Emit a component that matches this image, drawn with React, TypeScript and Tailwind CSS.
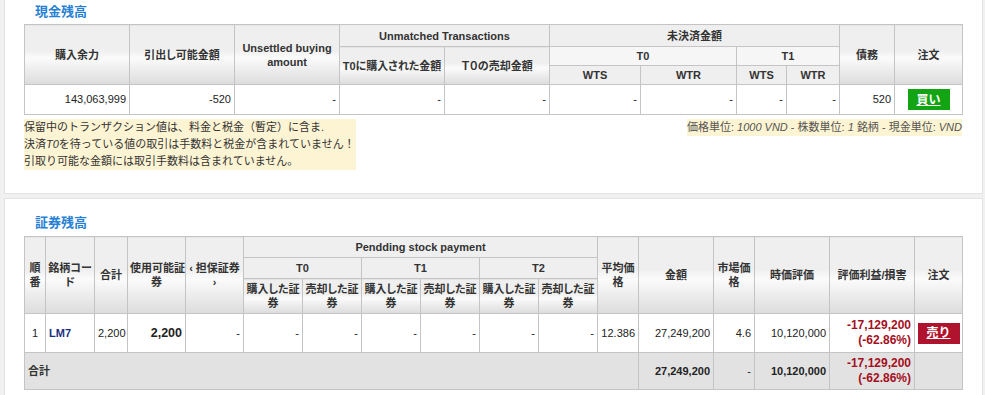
import React from "react";

const bd = "border border-[#c4c4c4]";
const grad =
  "bg-[linear-gradient(to_bottom,#efefef_0%,#efefef_42%,#fbfbfb_55%,#dcdcdc_100%)]";
const th = `${bd} font-bold text-center align-middle px-[2px] leading-[14px] text-[#333] [font-feature-settings:'palt']`;
const flat = "bg-[#efefef]";
const td = `${bd} text-right align-middle px-[3px] text-[#222]`;

function CashTable() {
  return (
    <table className="table-fixed border-collapse w-[938px]">
      <colgroup>
        <col className="w-[105px]" />
        <col className="w-[105px]" />
        <col className="w-[105px]" />
        <col className="w-[105px]" />
        <col className="w-[105px]" />
        <col className="w-[91px]" />
        <col className="w-[96px]" />
        <col className="w-[50px]" />
        <col className="w-[53px]" />
        <col className="w-[55px]" />
        <col className="w-[68px]" />
      </colgroup>
      <thead>
        <tr className="h-[22px]">
          <th rowSpan={3} className={`${th} ${grad}`}>購入余力</th>
          <th rowSpan={3} className={`${th} ${grad}`}>引出し可能金額</th>
          <th rowSpan={3} className={`${th} ${grad}`}>Unsettled buying amount</th>
          <th colSpan={2} className={`${th} ${flat}`}>Unmatched Transactions</th>
          <th colSpan={4} className={`${th} ${flat}`}>未決済金額</th>
          <th rowSpan={3} className={`${th} ${grad}`}>債務</th>
          <th rowSpan={3} className={`${th} ${grad}`}>注文</th>
        </tr>
        <tr className="h-[19px]">
          <th rowSpan={2} className={`${th} ${grad} whitespace-nowrap`}>T0に購入された金額</th>
          <th rowSpan={2} className={`${th} ${grad} whitespace-nowrap`}>Ｔ０の売却金額</th>
          <th colSpan={2} className={`${th} bg-[#f6f6f6]`}>T0</th>
          <th colSpan={2} className={`${th} bg-[#f6f6f6]`}>T1</th>
        </tr>
        <tr className="h-[19px]">
          <th className={`${th} ${flat}`}>WTS</th>
          <th className={`${th} ${flat}`}>WTR</th>
          <th className={`${th} ${flat}`}>WTS</th>
          <th className={`${th} ${flat}`}>WTR</th>
        </tr>
      </thead>
      <tbody>
        <tr className="h-[30px] bg-white">
          <td className={td}>143,063,999</td>
          <td className={td}>-520</td>
          <td className={td}>-</td>
          <td className={td}>-</td>
          <td className={td}>-</td>
          <td className={td}>-</td>
          <td className={td}>-</td>
          <td className={td}>-</td>
          <td className={td}>-</td>
          <td className={td}>520</td>
          <td className={`${bd} text-center align-middle`}>
            <span className="inline-flex w-[42px] h-[21px] items-center justify-center bg-[#12a412] text-white font-bold text-[12px] underline">
              買い
            </span>
          </td>
        </tr>
      </tbody>
    </table>
  );
}

function Two({ a, b }: { a: string; b: string }) {
  return (
    <>
      {a}
      <br />
      {b}
    </>
  );
}

function StockTable() {
  const sub = ["購入した証", "売却した証", "購入した証", "売却した証", "購入した証", "売却した証"];
  return (
    <table className="table-fixed border-collapse w-[938px]">
      <colgroup>
        <col className="w-[21px]" />
        <col className="w-[49px]" />
        <col className="w-[33px]" />
        <col className="w-[58px]" />
        <col className="w-[58px]" />
        <col className="w-[59px]" />
        <col className="w-[59px]" />
        <col className="w-[59px]" />
        <col className="w-[59px]" />
        <col className="w-[59px]" />
        <col className="w-[59px]" />
        <col className="w-[41px]" />
        <col className="w-[75px]" />
        <col className="w-[41px]" />
        <col className="w-[75px]" />
        <col className="w-[85px]" />
        <col className="w-[48px]" />
      </colgroup>
      <thead>
        <tr className="h-[21px]">
          <th rowSpan={3} className={`${th} ${grad} px-[1px]`}><Two a="順" b="番" /></th>
          <th rowSpan={3} className={`${th} ${grad} whitespace-nowrap`}><Two a="銘柄コー" b="ド" /></th>
          <th rowSpan={3} className={`${th} ${grad}`}>合計</th>
          <th rowSpan={3} className={`${th} ${grad} whitespace-nowrap`}><Two a="使用可能証" b="券" /></th>
          <th rowSpan={3} className={`${th} ${grad} whitespace-nowrap`}><Two a="‹ 担保証券" b="›" /></th>
          <th colSpan={6} className={`${th} ${flat}`}>Pendding stock payment</th>
          <th rowSpan={3} className={`${th} ${grad} whitespace-nowrap`}><Two a="平均価" b="格" /></th>
          <th rowSpan={3} className={`${th} ${grad}`}>金額</th>
          <th rowSpan={3} className={`${th} ${grad} whitespace-nowrap`}><Two a="市場価" b="格" /></th>
          <th rowSpan={3} className={`${th} ${grad}`}>時価評価</th>
          <th rowSpan={3} className={`${th} ${grad} whitespace-nowrap`}>評価利益/損害</th>
          <th rowSpan={3} className={`${th} ${grad}`}>注文</th>
        </tr>
        <tr className="h-[21px]">
          <th colSpan={2} className={`${th} ${flat}`}>T0</th>
          <th colSpan={2} className={`${th} ${flat}`}>T1</th>
          <th colSpan={2} className={`${th} ${flat}`}>T2</th>
        </tr>
        <tr className="h-[35px]">
          {sub.map((s, i) => (
            <th key={i} className={`${th} ${grad} px-[1px] whitespace-nowrap`}>
              <Two a={s} b="券" />
            </th>
          ))}
        </tr>
      </thead>
      <tbody>
        <tr className="h-[39px] bg-white">
          <td className={`${bd} text-center align-middle text-[#222]`}>1</td>
          <td className={`${bd} text-left align-middle px-[3px] font-bold text-[#1c2f80]`}>LM7</td>
          <td className={td}>2,200</td>
          <td className={`${td} font-bold text-[12.5px] text-[#111]`}>2,200</td>
          <td className={td}>-</td>
          <td className={td}>-</td>
          <td className={td}>-</td>
          <td className={td}>-</td>
          <td className={td}>-</td>
          <td className={td}>-</td>
          <td className={td}>-</td>
          <td className={td}>12.386</td>
          <td className={td}>27,249,200</td>
          <td className={td}>4.6</td>
          <td className={td}>10,120,000</td>
          <td className={`${td} font-bold text-[12px] leading-[15px] text-[#a50f1e]`}>
            -17,129,200
            <br />
            (-62.86%)
          </td>
          <td className={`${bd} text-center align-middle`}>
            <span className="inline-flex w-[42px] h-[21px] items-center justify-center bg-[#b0132d] text-white font-bold text-[12px] underline">
              売り
            </span>
          </td>
        </tr>
        <tr className="h-[37px] bg-[#e2e2e2]">
          <td colSpan={12} className={`${bd} text-left align-middle px-[3px] font-bold text-[#333]`}>
            合計
          </td>
          <td className={`${td} font-bold`}>27,249,200</td>
          <td className={td}>-</td>
          <td className={`${td} font-bold`}>10,120,000</td>
          <td className={`${td} font-bold text-[12px] leading-[15px] text-[#a50f1e]`}>
            -17,129,200
            <br />
            (-62.86%)
          </td>
          <td className={bd}></td>
        </tr>
      </tbody>
    </table>
  );
}

export default function App() {
  return (
    <div className="min-h-screen bg-[#f1f1f1] font-['Liberation_Sans','Noto_Sans_CJK_JP',sans-serif] text-[11px] text-[#333] overflow-hidden">
      <div className="ml-[4px] w-[979px] bg-white border-x border-b border-[#e3e3e3] pl-[19px] pt-[4px] h-[194px]">
        <div className="h-[16px] leading-[16px] pl-[11px] mb-[4px] text-[13px] font-bold text-[#2680d4]">現金残高</div>
        <CashTable />
        <div className="flex justify-between items-start mt-[4px] w-[938px]">
          <div className="w-[332px] bg-[#fdf4d3] leading-[17px] text-[11px] text-[#333]">
            <div>保留中のトランザクション値は、料金と税金（暫定）に含ま.</div>
            <div>
              決済<i>T0</i>を待っている値の取引は手数料と税金が含まれていません！
            </div>
            <div>引取り可能な金額には取引手数料は含まれていません。</div>
          </div>
          <div className="bg-[#fdf4d3] leading-[17px] text-[11px] text-[#555]">
            価格単位: <i>1000 VND</i> - 株数単位: <i>1 </i>銘柄 - 現金単位: <i>VND</i>
          </div>
        </div>
      </div>
      <div className="ml-[4px] mt-[4px] w-[979px] bg-white border border-[#e3e3e3] pl-[19px] pt-[16px] h-[220px]">
        <div className="h-[16px] leading-[16px] pl-[11px] mb-[5px] text-[13px] font-bold text-[#2680d4]">証券残高</div>
        <StockTable />
      </div>
    </div>
  );
}
